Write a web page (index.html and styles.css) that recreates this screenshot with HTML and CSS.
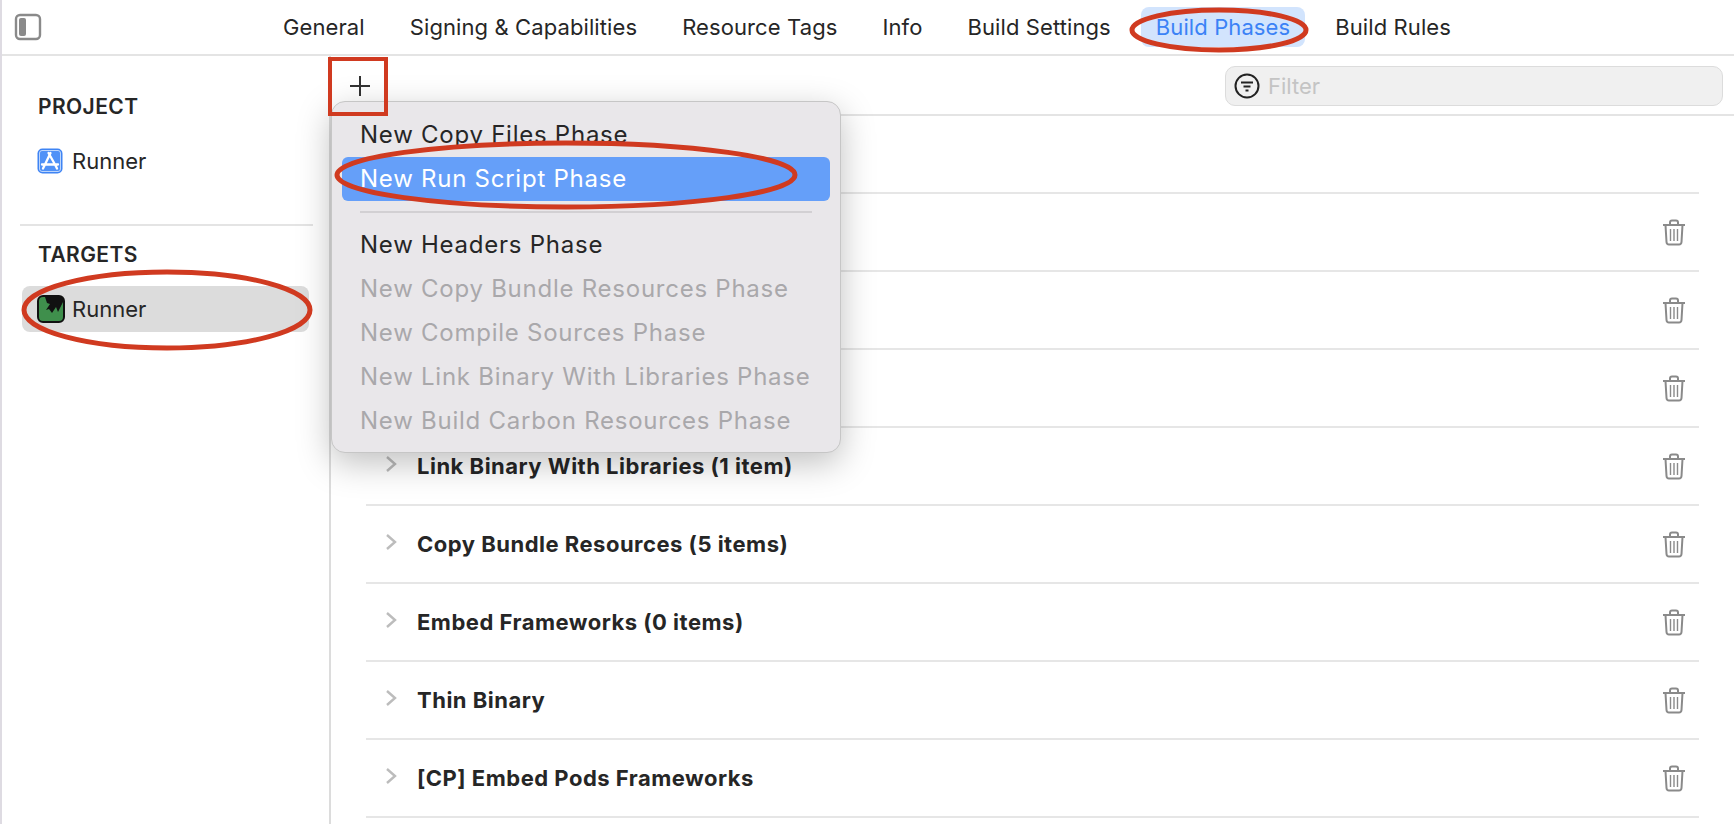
FILE: index.html
```html
<!DOCTYPE html>
<html>
<head>
    <title>Build Phases</title>
    <meta name="viewport" content="width=device-width, initial-scale=1">
    <link rel="stylesheet" href="styles.css">
</head>
<body>
    <div class="app">
        <div class="tabbar">
            <svg class="toggle-icon" width="28" height="28" viewBox="0 0 28 28">
                <rect x="2" y="2" width="24" height="24" rx="4" fill="#fff" stroke="#8a8a8a" stroke-width="2.4"/>
                <rect x="5" y="5" width="7" height="18" rx="2" fill="#8a8a8a"/>
            </svg>
            <div class="tabs">
                <span class="tab">General</span>
                <span class="tab">Signing &amp; Capabilities</span>
                <span class="tab">Resource Tags</span>
                <span class="tab">Info</span>
                <span class="tab">Build Settings</span>
                <span class="tab tab-active">Build Phases</span>
                <span class="tab">Build Rules</span>
            </div>
        </div>

        <div class="content">
            <div class="sidebar">
                <div class="side-title">PROJECT</div>
                <div class="side-item">
                    <svg width="26" height="26" viewBox="0 0 26 26">
                        <rect x="0.5" y="0.5" width="25" height="25" rx="5" fill="#3f84f4"/>
                        <rect x="2.5" y="2.5" width="21" height="21" rx="2.5" fill="#4f91f7" stroke="#dbe8fd" stroke-width="0.8"/>
                        <path d="M13.5 5 L8 16.5 L6 20.5 M11.5 5 L18 16.5 L20 20.5 M5 16.5 H21" stroke="#fff" stroke-width="2.3" fill="none" stroke-linecap="round"/>
                    </svg>
                    <span>Runner</span>
                </div>
                <div class="side-divider"></div>
                <div class="side-title">TARGETS</div>
                <div class="side-item side-item-selected">
                    <svg width="28" height="28" viewBox="0 0 28 28">
                        <rect x="1" y="1" width="26" height="26" rx="5" fill="#3f8f4c" stroke="#111" stroke-width="2"/>
                        <path d="M8 2 H26 V7 L21 17 L19 12 L15 18 L12 14 L9 15 L13 9 L10 8 Z" fill="#111"/>
                    </svg>
                    <span>Runner</span>
                </div>
            </div>

            <div class="main">
                <div class="toolbar">
                    <svg class="plus-icon" width="22" height="22" viewBox="0 0 22 22">
                        <path d="M11 1 V21 M1 11 H21" stroke="#333" stroke-width="2"/>
                    </svg>
                    <div class="filter">
                        <svg width="26" height="26" viewBox="0 0 26 26">
                            <circle cx="13" cy="13" r="11.5" fill="none" stroke="#222" stroke-width="2"/>
                            <path d="M7 9.5 H19 M9.5 13.5 H16.5 M11.5 17.5 H14.5" stroke="#222" stroke-width="2"/>
                        </svg>
                        <span>Filter</span>
                    </div>
                </div>

                <div class="phases" id="phases"></div>
            </div>
        </div>
    </div>

    <div class="menu">
        <div class="menu-item">New Copy Files Phase</div>
        <div class="menu-item menu-item-active">New Run Script Phase</div>
        <div class="menu-sep"></div>
        <div class="menu-item">New Headers Phase</div>
        <div class="menu-item menu-item-off">New Copy Bundle Resources Phase</div>
        <div class="menu-item menu-item-off">New Compile Sources Phase</div>
        <div class="menu-item menu-item-off">New Link Binary With Libraries Phase</div>
        <div class="menu-item menu-item-off">New Build Carbon Resources Phase</div>
    </div>

    <svg class="marks" width="1734" height="824" viewBox="0 0 1734 824">
        <rect x="330" y="59" width="56" height="55" fill="none" stroke="#d03a20" stroke-width="4"/>
        <ellipse cx="1219" cy="30" rx="87" ry="20" fill="none" stroke="#d03a20" stroke-width="5"/>
        <ellipse cx="566" cy="175" rx="229" ry="32" fill="none" stroke="#d03a20" stroke-width="5"/>
        <ellipse cx="167" cy="310" rx="143" ry="38" fill="none" stroke="#d03a20" stroke-width="5"/>
    </svg>

    <script>
        var phases = [
            { name: "Dependencies (0 items)", trash: false },
            { name: "[CP] Check Pods Manifest.lock", trash: true },
            { name: "Run Script", trash: true },
            { name: "Compile Sources (3 items)", trash: true },
            { name: "Link Binary With Libraries (1 item)", trash: true },
            { name: "Copy Bundle Resources (5 items)", trash: true },
            { name: "Embed Frameworks (0 items)", trash: true },
            { name: "Thin Binary", trash: true },
            { name: "[CP] Embed Pods Frameworks", trash: true }
        ];

        var chevron = '<svg class="chevron" width="12" height="18" viewBox="0 0 12 18"><path d="M2 2 L10 9 L2 16" fill="none" stroke="#bcbcbc" stroke-width="2.4"/></svg>';
        var trash = '<svg class="trash" width="24" height="27" viewBox="0 0 24 27"><g fill="none" stroke="#8a8a8a" stroke-width="2"><path d="M1 6 H23"/><path d="M8 6 V3.5 Q8 1.5 10 1.5 H14 Q16 1.5 16 3.5 V6"/><path d="M3.5 6 L4.5 23 Q4.7 25.5 7 25.5 H17 Q19.3 25.5 19.5 23 L20.5 6"/></g><path d="M8.5 10 V22 M12 10 V22 M15.5 10 V22" stroke="#8a8a8a" stroke-width="1.4"/></svg>';

        var container = document.getElementById("phases");
        for (var i = 0; i < phases.length; i++) {
            var row = document.createElement("div");
            row.className = "phase";
            row.innerHTML = chevron + '<span class="phase-name">' + phases[i].name + '</span>' + (phases[i].trash ? trash : '');
            container.appendChild(row);
        }
    </script>
</body>
</html>
```

FILE: styles.css
```css
html, body {
    margin: 0;
    height: 100%;
    overflow: hidden;
    background: #fff;
}
body {
    font-family: Inter, "Noto Sans", sans-serif;
    color: #262626;
    position: relative;
}
.app {
    display: flex;
    flex-direction: column;
    height: 100vh;
    border-left: 2px solid #dedbe2;
    box-sizing: border-box;
}
.tabbar {
    display: flex;
    align-items: center;
    height: 54px;
    flex-shrink: 0;
    border-bottom: 2px solid #e4e4e4;
    padding-left: 12px;
}
.toggle-icon {
    flex-shrink: 0;
}
.tabs {
    display: flex;
    align-items: center;
    gap: 15px;
    margin-left: 226px;
}
.tab {
    padding: 0 15px;
    height: 40px;
    line-height: 40px;
    font-size: 22px;
    letter-spacing: 0.1px;
    border-radius: 8px;
    white-space: nowrap;
}
.tab-active {
    background-color: #d2e4fd;
    color: #3b82f6;
}
.content {
    display: flex;
    flex: 1;
    min-height: 0;
}
.sidebar {
    flex-shrink: 0;
    border-right: 2px solid #dcdcdc;
    padding: 39px 20px 0 20px;
    width: 287px;
}
.side-title {
    font-size: 21px;
    font-weight: 600;
    letter-spacing: 0.4px;
    line-height: 24px;
    padding-left: 16px;
}
.side-item {
    display: flex;
    align-items: center;
    gap: 9px;
    height: 46px;
    padding-left: 15px;
    font-size: 22px;
    border-radius: 8px;
    margin-top: 19px;
}
.side-item-selected {
    background-color: #dcdcdc;
    margin-top: 19px;
    gap: 7px;
}
.side-divider {
    height: 2px;
    background: #e4e4e4;
    margin: 40px -4px 17px -2px;
}
.main {
    flex: 1;
    min-width: 0;
}
.toolbar {
    display: flex;
    align-items: center;
    justify-content: space-between;
    height: 58px;
    border-bottom: 2px solid #e4e4e4;
    padding: 0 11px 0 18px;
}
.plus-icon {
    margin-top: 2px;
}
.filter {
    display: flex;
    align-items: center;
    gap: 8px;
    width: 498px;
    height: 40px;
    box-sizing: border-box;
    padding-left: 8px;
    margin-top: 1px;
    background: #f0f0f0;
    border: 1px solid #dcdcdc;
    border-radius: 10px;
    font-size: 22px;
    color: #c4c4c4;
}
.phases {
    margin-left: 35px;
    margin-right: 35px;
}
.phase {
    display: flex;
    align-items: center;
    height: 76px;
    border-bottom: 2px solid #e6e6e6;
    padding-left: 19px;
    padding-right: 13px;
}
.chevron {
    margin-top: -4px;
    flex-shrink: 0;
}
.phase-name {
    margin-left: 20px;
    font-size: 22px;
    font-weight: 700;
    letter-spacing: 0.5px;
    flex: 1;
}
.menu {
    position: absolute;
    left: 331px;
    top: 101px;
    width: 510px;
    height: 352px;
    box-sizing: border-box;
    padding: 11px 10px;
    background: #e9e7ea;
    border: 1px solid #c6c6c6;
    border-radius: 14px;
    box-shadow: 0 10px 34px rgba(0, 0, 0, 0.25);
    font-size: 24px;
    letter-spacing: 0.75px;
}
.menu-item {
    height: 44px;
    line-height: 44px;
    padding-left: 18px;
    border-radius: 6px;
    white-space: nowrap;
}
.menu-item-active {
    background: #659ff9;
    color: #fff;
}
.menu-item-off {
    color: #a9a8ab;
}
.menu-sep {
    height: 2px;
    background: #d2d0d3;
    margin: 10px 18px;
}
.marks {
    position: absolute;
    left: 0;
    top: 0;
    pointer-events: none;
}
```
